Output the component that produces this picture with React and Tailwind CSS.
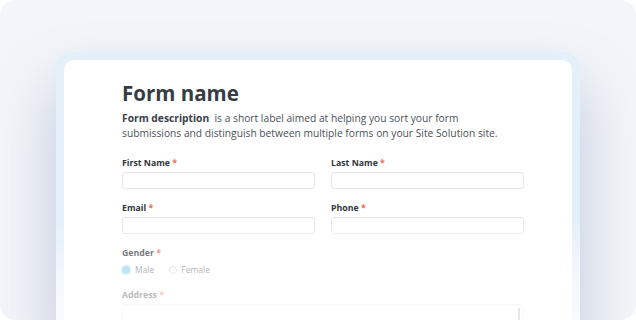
import React from "react";

const Label = ({ children }) => (
  <div className="text-[8.75px] leading-[12px] font-bold text-[#2f353b]">
    {children} <span className="text-[#ee6a55]">*</span>
  </div>
);

const Field = ({ label }) => (
  <div className="flex flex-col w-[193px]">
    <Label>{label}</Label>
    <div className="mt-[3px] h-[17px] rounded-[3px] border border-[#e4e7ea] bg-white"></div>
  </div>
);

const App = () => {
  return (
    <div className="w-[636px] h-[320px] bg-white" style={{ fontFamily: '"Open Sans", sans-serif' }}>
      <div className="w-[636px] h-[320px] rounded-[16px] bg-[#f2f5f9] overflow-hidden pt-[52px] px-[56px]">
        <div className="relative h-[290px] rounded-[16px] bg-[#e3eff9] p-[8px] shadow-[0_34px_60px_rgba(110,130,170,0.38)]">
          <div className="h-full rounded-[10px] bg-white pl-[58px] pt-[19px]">
            <div className="w-[402px]">
              <h1 className="text-[20.5px] leading-[28px] font-bold text-[#363c43]">Form name</h1>
              <p className="mt-[4px] max-w-[388px] text-[10.25px] leading-[15px] text-[#4b5259]">
                <span className="font-bold text-[#3a4047]">Form description</span>
                {"\u00a0 is a short label aimed at helping you sort your form submissions and distinguish between multiple forms on your Site Solution site."}
              </p>

              <div className="mt-[16px] flex justify-between">
                <Field label="First Name" />
                <Field label="Last Name" />
              </div>
              <div className="mt-[13px] flex justify-between">
                <Field label="Email" />
                <Field label="Phone" />
              </div>

              <div className="mt-[13px]">
                <Label>Gender</Label>
                <div className="mt-[6px] flex items-center h-[10px] text-[8.5px] text-[#5f656b]">
                  <span className="w-[8px] h-[8px] rounded-full bg-[#7fc8ee] ring-[1.5px] ring-[#cfeaf8]"></span>
                  <span className="ml-[5px]">Male</span>
                  <span className="ml-[15px] w-[8px] h-[8px] rounded-full border border-[#c9ced3] bg-white"></span>
                  <span className="ml-[4px]">Female</span>
                </div>
              </div>

              <div className="mt-[14px]">
                <Label>Address</Label>
                <div className="mt-[3px] h-[40px] rounded-[3px] border border-[#e4e7ea] bg-white flex justify-end pr-[3px] pt-[3px]">
                  <div className="w-[2px] h-[30px] bg-[#9aa0a6]"></div>
                </div>
              </div>
            </div>
          </div>
          <div className="absolute inset-x-0 top-[165px] bottom-0 rounded-b-[16px] bg-gradient-to-b from-white/0 via-white/60 to-white/85"></div>
        </div>
      </div>
    </div>
  );
};

export default App;
